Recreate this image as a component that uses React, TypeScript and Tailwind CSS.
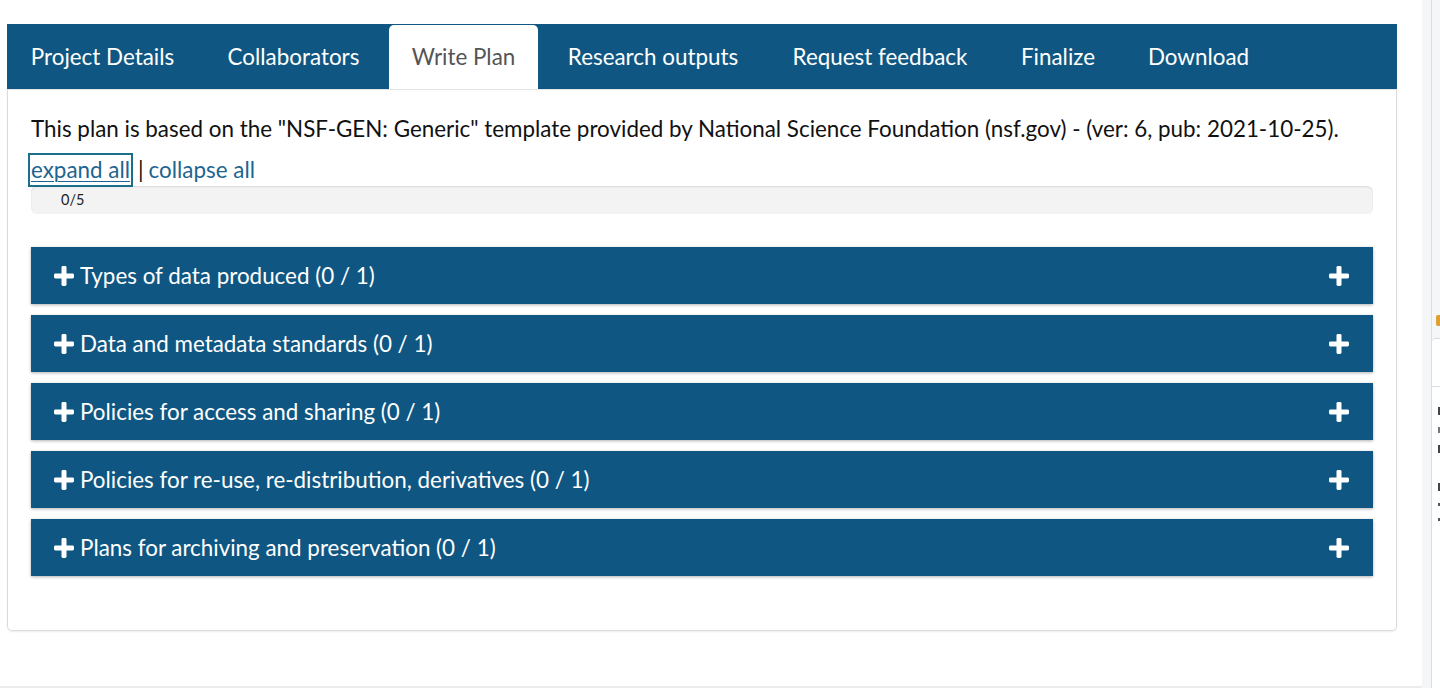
import React from "react";

const tabs = [
  { label: "Project Details", w: 191 },
  { label: "Collaborators", w: 183 },
  { label: "Write Plan", w: 149, active: true },
  { label: "Research outputs", w: 222 },
  { label: "Request feedback", w: 224 },
  { label: "Finalize", w: 124 },
  { label: "Download", w: 149 },
];

const sections = [
  "Types of data produced (0 / 1)",
  "Data and metadata standards (0 / 1)",
  "Policies for access and sharing (0 / 1)",
  "Policies for re-use, re-distribution, derivatives (0 / 1)",
  "Plans for archiving and preservation (0 / 1)",
];

function Plus() {
  return (
    <svg width="22" height="22" viewBox="0 0 22 22" className="shrink-0">
      <rect x="8.5" y="1" width="5" height="20" rx="1.4" fill="#fff" />
      <rect x="1" y="8.5" width="20" height="5" rx="1.4" fill="#fff" />
    </svg>
  );
}

export default function App() {
  return (
    <div
      className="w-[1440px] h-[688px] bg-white flex overflow-hidden relative"
      style={{ fontFamily: "Lato, 'Noto Sans', sans-serif" }}
    >
      <div className="w-[1422px] shrink-0 flex flex-col">
        <div className="pl-[7px] pt-[24px] flex-1">
          <div className="w-[1390px]">
            <div className="h-[65px] bg-[#0f5782] flex gap-[4px] items-end">
              {tabs.map((t) =>
                t.active ? (
                  <div
                    key={t.label}
                    style={{ width: t.w }}
                    className="h-[64px] bg-white rounded-t-[5px] flex items-center justify-center text-[22.4px] text-[#555] whitespace-nowrap"
                  >
                    {t.label}
                  </div>
                ) : (
                  <div
                    key={t.label}
                    style={{ width: t.w }}
                    className="h-[65px] flex items-center justify-center text-[22.4px] text-white whitespace-nowrap"
                  >
                    {t.label}
                  </div>
                )
              )}
            </div>
            <div className="border border-[#dcdcdc] border-t-[#e4e4e4] rounded-b-[5px] shadow-[0_1px_2px_rgba(0,0,0,0.08)] px-[23px] pt-[24px] pb-[54px]">
              <div className="text-[22.4px] leading-[30px] text-[#111] whitespace-nowrap">
                This plan is based on the "NSF-GEN: Generic" template provided by National Science Foundation (nsf.gov) - (ver: 6, pub: 2021-10-25).
              </div>
              <div className="mt-[9px] h-[34px] flex items-center text-[22.4px] leading-[30px] -ml-[3px] whitespace-nowrap">
                <span className="inline-block border-2 border-[#1b6f8a] px-px text-[#1d6590] underline decoration-1 underline-offset-[3px]">
                  expand all
                </span>
                <span className="text-[#111] mx-[5px]">|</span>
                <span className="text-[#1d6590]">collapse all</span>
              </div>
              <div className="-mt-px h-[28px] rounded-[6px] bg-[#f3f3f3] shadow-[inset_0_1px_2px_rgba(0,0,0,0.1)] flex items-center pl-[30px] text-[14.5px] text-[#222]">
                0/5
              </div>
              <div className="mt-[33px] flex flex-col gap-[11px]">
                {sections.map((s) => (
                  <div
                    key={s}
                    className="h-[57px] bg-[#0f5782] shadow-[0_1px_3px_rgba(0,0,0,0.3)] flex items-center pl-[22px] pr-[23px] text-white"
                  >
                    <Plus />
                    <span className="ml-[5px] text-[22.4px] whitespace-nowrap">{s}</span>
                    <span className="ml-auto">
                      <Plus />
                    </span>
                  </div>
                ))}
              </div>
            </div>
          </div>
        </div>
        <div className="h-[2px] bg-[#ececec]" />
      </div>
      <div className="w-[18px] shrink-0 bg-[#f5f6f8] flex">
        <div className="w-[9px] shrink-0" />
        <div className="flex-1 border-l border-[#dadde1] flex flex-col">
          <div className="h-[315px]" />
          <div className="h-[11px] w-[4px] ml-[4px] bg-[#e0a030] rounded-l-[2px]" />
          <div className="mt-[12px] flex-1 bg-white border-t border-[#dadde1] rounded-tl-[4px] flex flex-col">
            <div className="h-[48px] border-b border-[#dadde1]" />
            <div className="pl-[6px] pt-[20px] flex flex-col gap-[12px]">
              <div className="h-[8px] w-[3px] bg-[#444]" />
              <div className="h-[6px] w-[3px] bg-[#777]" />
              <div className="h-[8px] w-[3px] bg-[#444]" />
              <div className="h-[8px] w-[3px] bg-[#444] mt-[18px]" />
              <div className="h-[3px] w-[3px] bg-[#555]" />
              <div className="h-[3px] w-[3px] bg-[#555]" />
            </div>
          </div>
        </div>
      </div>
    </div>
  );
}
